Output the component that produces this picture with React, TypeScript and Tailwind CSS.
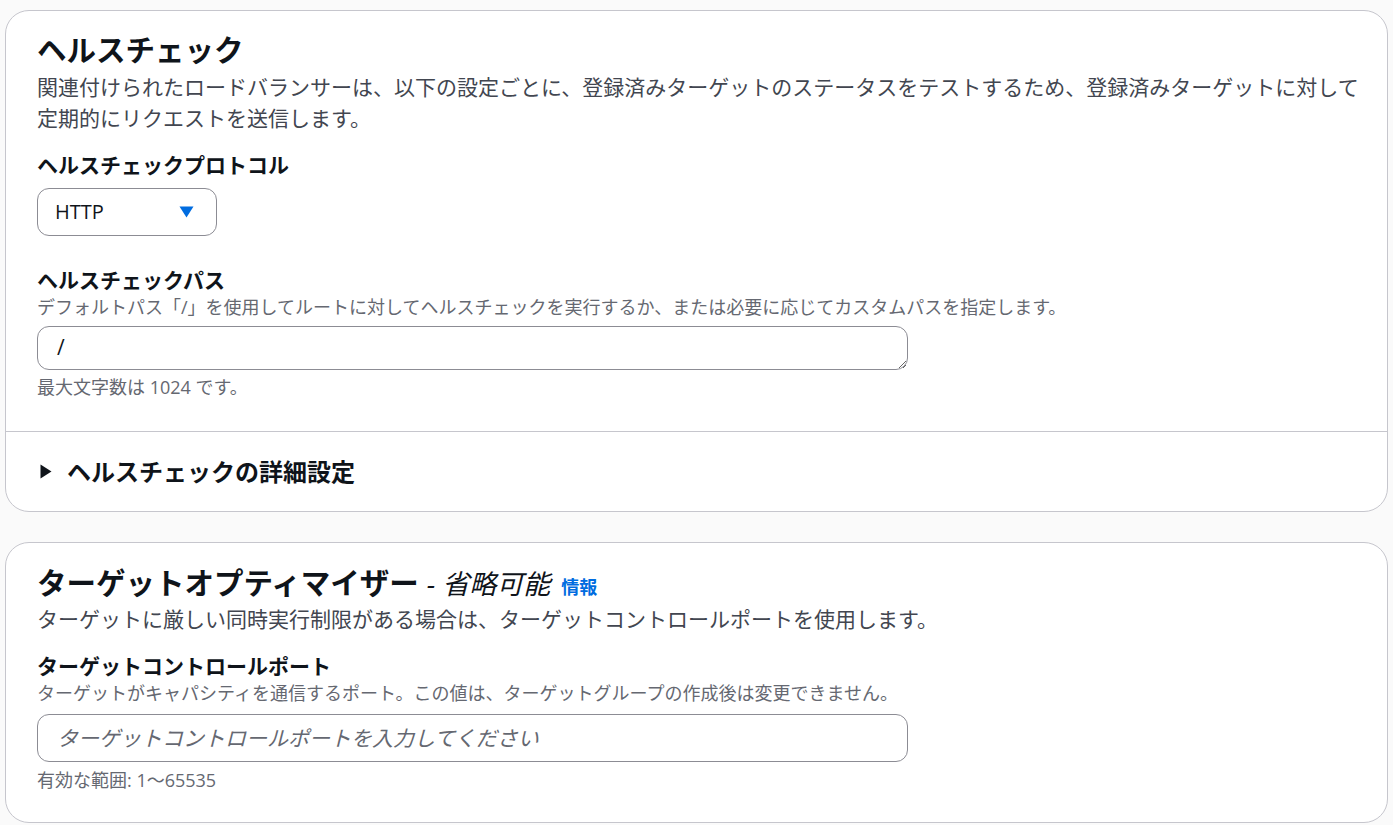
import React from 'react';

const FONT = { fontFamily: '"Open Sans", "Noto Sans CJK JP", "Noto Sans", sans-serif' };

function Caret() {
  return (
    <svg width="15" height="12" viewBox="0 0 15 12" className="shrink-0">
      <path d="M0.5 0.5 L14.5 0.5 L7.5 11.5 Z" fill="#006ce0" />
    </svg>
  );
}

function ExpandArrow() {
  return (
    <svg width="12" height="15" viewBox="0 0 12 15" className="shrink-0">
      <path d="M0.5 0.5 L11.5 7.5 L0.5 14.5 Z" fill="#0f141a" />
    </svg>
  );
}

export default function App() {
  return (
    <div className="min-h-screen bg-[#fafafa] px-[5px] pt-[10px] text-[#0f141a]" style={FONT}>
      {/* Health check */}
      <section className="rounded-[24px] border border-[#c6c6cd] bg-white">
        <div className="pl-[31px] pr-[20px] pt-[19px] pb-[33px]">
          <h2 className="text-[29.5px] font-bold leading-[40px]">ヘルスチェック</h2>
          <p className="mt-[2px] text-[21px] leading-[31px] text-[#424650]">
            関連付けられたロードバランサーは、以下の設定ごとに、登録済みターゲットのステータスをテストするため、登録済みターゲットに対して定期的にリクエストを送信します。
          </p>

          <div className="mt-[16px] text-[21px] font-bold leading-[31px]">ヘルスチェックプロトコル</div>
          <div className="mt-[7px] flex h-[48px] w-[180px] items-center justify-between rounded-[12px] border border-[#8c8c94] pl-[17px] pr-[22px] text-[20px]">
            <span>HTTP</span>
            <Caret />
          </div>

          <div className="mt-[29px] text-[21px] font-bold leading-[31px]">ヘルスチェックパス</div>
          <div className="text-[18px] leading-[22px] text-[#656871]">
            デフォルトパス「/」を使用してルートに対してヘルスチェックを実行するか、または必要に応じてカスタムパスを指定します。
          </div>
          <textarea
            className="mt-[8px] block h-[44px] w-[871px] rounded-[12px] border border-[#8c8c94] px-[19px] py-[4px] text-[21px] leading-[33px] text-[#0f141a] outline-none"
            defaultValue="/"
            rows={1}
            style={FONT}
          />
          <div className="mt-[6px] text-[18px] leading-[22px] text-[#656871]">最大文字数は 1024 です。</div>
        </div>

        <div className="border-t border-[#c6c6cd]" />

        <div className="flex items-center gap-[15px] px-[34px] pt-[24px] pb-[24px]">
          <ExpandArrow />
          <span className="text-[24px] font-bold leading-[31px]">ヘルスチェックの詳細設定</span>
        </div>
      </section>

      {/* Target optimizer */}
      <section className="mt-[30px] rounded-[24px] border border-[#c6c6cd] bg-white">
        <div className="px-[31px] pt-[20px] pb-[31px]">
          <h2 className="h-[40px] overflow-hidden whitespace-nowrap text-[29.5px] leading-[40px]">
            <span className="font-bold">ターゲットオプティマイザー</span>
            <span className="ml-[8px] text-[27px] italic font-normal">- 省略可能</span>
            <span className="ml-[11px] text-[18px] font-bold text-[#006ce0]">情報</span>
          </h2>
          <p className="mt-[1px] text-[21px] leading-[31px] text-[#424650]">
            ターゲットに厳しい同時実行制限がある場合は、ターゲットコントロールポートを使用します。
          </p>

          <div className="mt-[16px] text-[21px] font-bold leading-[31px]">ターゲットコントロールポート</div>
          <div className="text-[18px] leading-[22px] text-[#656871]">
            ターゲットがキャパシティを通信するポート。この値は、ターゲットグループの作成後は変更できません。
          </div>
          <input
            className="mt-[10px] block h-[48px] w-[871px] rounded-[12px] border border-[#8c8c94] px-[19px] text-[21px] text-[#0f141a] outline-none placeholder:italic placeholder:text-[#656871]"
            placeholder="ターゲットコントロールポートを入力してください"
            style={FONT}
          />
          <div className="mt-[7px] text-[18px] leading-[22px] text-[#656871]">有効な範囲: 1〜65535</div>
        </div>
      </section>
    </div>
  );
}
